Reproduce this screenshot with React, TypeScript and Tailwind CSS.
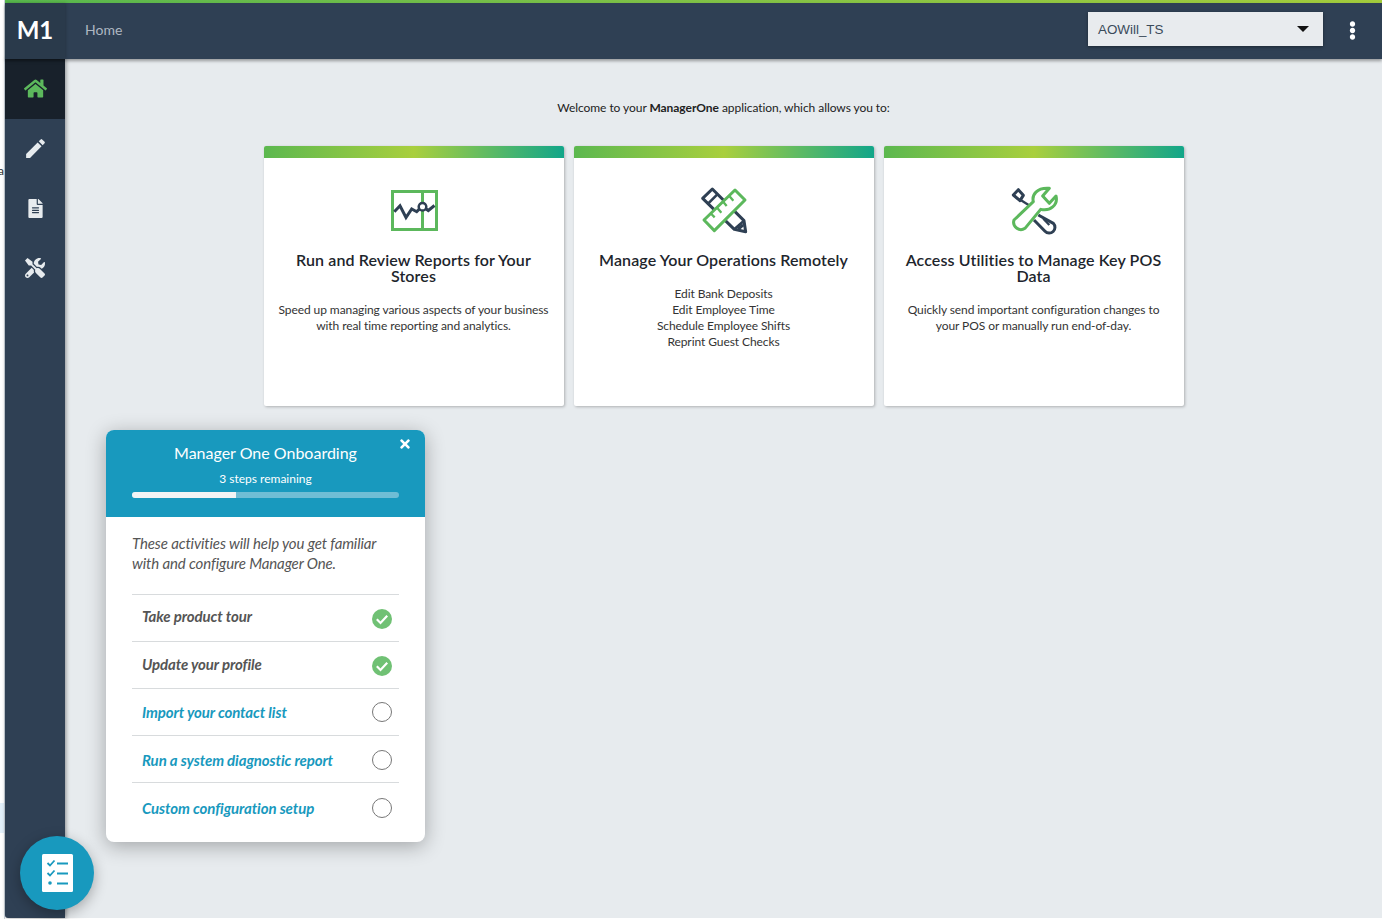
import { FaHome, FaFileAlt, FaTools, FaTimes, FaEllipsisV } from 'react-icons/fa';
import { MdEdit } from 'react-icons/md';

const ReportIcon = () => (
  <svg width="48" height="42" viewBox="0 0 48 42" fill="none">
    <rect x="1.500" y="1.500" width="44" height="38" stroke="#5cb85c" strokeWidth="3" />
    <path d="M31.500 2V40" stroke="#5cb85c" strokeWidth="3" />
    <path d="M3.300 21.700L9 15.700L15 27.500L20.700 19L25.700 21.700L29 18.500" stroke="#2f4054" strokeWidth="3" />
    <circle cx="31.500" cy="16.700" r="3.800" fill="#fff" stroke="#2f4054" strokeWidth="2.500" />
    <path d="M34.500 18.500L37.300 20.500L43.500 15.500" stroke="#2f4054" strokeWidth="3" />
  </svg>
);

const RulerIcon = () => (
  <svg width="100" height="70" viewBox="0 0 300 210" fill="none">
    <path d="M68 85L97 57L192 152L197 185L163 178Z" fill="#fff" stroke="#2f4054" strokeWidth="9" strokeLinejoin="round" />
    <path d="M85 100L112 73M163 178L192 152M175 178L190 165" stroke="#2f4054" strokeWidth="8" />
    <path d="M165 60L195 90L103 182L72 150Z" fill="#fff" stroke="#5cb85c" strokeWidth="9" strokeLinejoin="round" />
    <path d="M148 78L160 92M130 96L140 108M112 114L124 128M94 132L104 142" stroke="#5cb85c" strokeWidth="7" />
  </svg>
);

const WrenchIcon = () => (
  <svg width="100" height="70" viewBox="0 0 300 210" fill="none">
    <path d="M70 75L85 59L100 76L90 92Z" stroke="#2f4054" strokeWidth="9" strokeLinejoin="round" />
    <path d="M92 90L124 110" stroke="#2f4054" strokeWidth="7" />
    <path d="M145 135L190 160A17 17 0 0 1 165 184L132 150" stroke="#2f4054" strokeWidth="9" strokeLinejoin="round" />
    <path d="M160 146L178 165" stroke="#2f4054" strokeWidth="7" />
    <path d="M72 150L130 95C125 75 140 52 178 55L158 78L178 100L198 78C205 105 180 125 152 118L105 175A22 22 0 0 1 72 150Z" fill="#fff" stroke="#5cb85c" strokeWidth="9" strokeLinejoin="round" />
  </svg>
);

const ChecklistIcon = () => (
  <svg width="32" height="38" viewBox="0 0 32 38" fill="none">
    <rect width="31" height="38" rx="1.500" fill="#fff" />
    <path d="M5.500 9L8 11.500L12.500 6.500M5.500 19L8 21.500L12.500 16.500" stroke="#1899be" strokeWidth="1.800" />
    <circle cx="8" cy="29" r="1.800" fill="#1899be" />
    <path d="M15 9.500H26M15 19.500H26M15 29.500H26" stroke="#1899be" strokeWidth="1.800" />
  </svg>
);

const DoneIcon = () => (
  <svg width="20" height="20" viewBox="0 0 20 20" fill="none">
    <circle cx="10" cy="10" r="10" fill="#70c174" />
    <path d="M4.800 10.300L8.500 14L15.200 6.800" stroke="#fff" strokeWidth="2.200" />
  </svg>
);

const cards = [
  { title: 'Run and Review Reports for Your Stores', lines: ['Speed up managing various aspects of your business', 'with real time reporting and analytics.'], icon: 'report' },
  { title: 'Manage Your Operations Remotely', lines: ['Edit Bank Deposits', 'Edit Employee Time', 'Schedule Employee Shifts', 'Reprint Guest Checks'], icon: 'ruler' },
  { title: 'Access Utilities to Manage Key POS Data', lines: ['Quickly send important configuration changes to', 'your POS or manually run end-of-day.'], icon: 'wrench' },
];

// the rows in the screenshot aren't evenly centred, so each one carries its own nudge
const steps = [
  { label: 'Take product tour', done: true, text: 'pb-[4px]', mark: 'pt-[2px]' },
  { label: 'Update your profile', done: true, text: 'pb-[2px]', mark: 'pt-[2px]' },
  { label: 'Import your contact list', done: false, text: '', mark: '' },
  { label: 'Run a system diagnostic report', done: false, text: 'pt-[2px]', mark: 'pt-[2px]' },
  { label: 'Custom configuration setup', done: false, text: 'pt-[4px]', mark: 'pt-[4px]' },
];

const NavItem = ({ active, children }: { active?: boolean; children: React.ReactNode }) => (
  <div className={active ? 'h-[60px] pb-[2px] flex items-center justify-center bg-[#18212b] text-[#5cb85c]' : 'h-[60px] pb-[2px] flex items-center justify-center text-[#e7ebee]'}>
    {children}
  </div>
);

export default function App() {
  return (
    <div className="relative h-[919px] w-[1382px] overflow-hidden flex bg-white font-['Lato',sans-serif]">
      {/* sliver of the page behind the app */}
      <div className="w-[5px] shrink-0 border-r border-[#ccd5dd] overflow-hidden flex flex-col items-end text-[12px] text-[#333]">
        <div className="mt-[162px] leading-[18px]">a</div>
        <div className="mt-[623px] h-[30px] w-full bg-[#e3f0fa]" />
      </div>

      <div className="flex-1 min-w-0 flex flex-col">
        <div className="h-[3px] shrink-0 bg-gradient-to-r from-[#58b84e] to-[#a3cc3c]" />
        <header className="relative z-20 h-[56px] shrink-0 flex items-start bg-[#2f4054] shadow-[0_2px_3px_rgba(0,0,0,0.35)]">
          <div className="w-[60px] h-full pb-[2px] flex items-center justify-center bg-[#2a3a4b] text-white text-[24px] font-bold shadow-[1px_0_3px_rgba(0,0,0,0.2)]">M1</div>
          <div className="flex-1 h-[52px] flex items-center">
            <div className="ml-5 text-[14px] text-[#aeb7c2]">Home</div>
            <div className="ml-auto w-[235px] h-[34px] px-[10px] flex items-center justify-between bg-[#e8ebee] shadow-[0_1px_3px_rgba(0,0,0,0.4)] text-[13.400px] text-[#3a4a5a] font-['Liberation_Sans',sans-serif]">
              <span className="pt-[3px]">AOWill_TS</span>
              <span className="mr-[4px] w-0 h-0 border-x-[6px] border-x-transparent border-t-[6px] border-t-[#111]" />
            </div>
            <div className="w-[59px] pt-[2px] flex justify-center text-white text-[19px]"><FaEllipsisV /></div>
          </div>
        </header>

        <div className="flex-1 flex min-h-0 mb-[1px]">
          <nav className="relative z-10 w-[60px] shrink-0 bg-[#2f4054] shadow-[1px_0_4px_rgba(0,0,0,0.4)] rounded-bl-[3px]">
            <NavItem active><FaHome size={23} /></NavItem>
            <NavItem><MdEdit size={25} /></NavItem>
            <NavItem><FaFileAlt size={19} /></NavItem>
            <NavItem><FaTools size={20} /></NavItem>
          </nav>

          <main className="flex-1 bg-[#e7ebee] flex flex-col items-center pt-[40px]">
            <p className="text-[12px] leading-[18px] tracking-[-0.06px] text-[#222]">
              Welcome to your <b>ManagerOne</b> application, which allows you to:
            </p>
            <div className="mt-[29px] flex gap-[10px]">
              {cards.map((c) => (
                <div key={c.title} className="w-[300px] h-[260px] bg-white rounded-[2px] overflow-hidden shadow-[1px_1px_3px_rgba(0,0,0,0.25)] text-center">
                  <div className="h-[12px] bg-[linear-gradient(to_right,#5cb84f,#a9cf3e_50%,#12a689)]" />
                  <div className={c.icon === 'report' ? 'h-[94px] pt-[32px] pl-[2px] flex justify-center' : 'h-[94px] pt-[12px] pl-[12px] flex justify-center'}>
                    {c.icon === 'report' && <ReportIcon />}
                    {c.icon === 'ruler' && <RulerIcon />}
                    {c.icon === 'wrench' && <WrenchIcon />}
                  </div>
                  <h2 className="px-[20px] text-[16px] leading-[16px] tracking-[0.1px] font-semibold text-[#1d252c]">{c.title}</h2>
                  <div className="mt-[18px] text-[12px] leading-[16px] tracking-[-0.08px] text-[#333]">
                    {c.lines.map((l) => <div key={l}>{l}</div>)}
                  </div>
                </div>
              ))}
            </div>
          </main>
        </div>
      </div>

      {/* onboarding popover */}
      <div className="absolute z-30 left-[106px] top-[430px] w-[319px] h-[412px] bg-white rounded-[8px] shadow-[0_4px_20px_rgba(0,0,0,0.3)]">
        <div className="relative h-[87px] bg-[#1899be] rounded-t-[8px] px-[26px] pt-[12px] text-center text-white">
          <FaTimes size={14} className="absolute right-[13px] top-[7px]" />
          <div className="text-[16px] leading-[22px]">Manager One Onboarding</div>
          <div className="mt-[6px] text-[12px] leading-[18px]">3 steps remaining</div>
          <div className="mt-[4px] h-[6px] rounded-full bg-[#6fbdd5] overflow-hidden">
            <div className="h-full w-[104px] bg-[#f2f4f5]" />
          </div>
        </div>
        <div className="px-[26px]">
          <p className="pt-[16px] pb-[21px] text-[15px] leading-[20px] italic tracking-[-0.12px] text-[#555]">
            These activities will help you get familiar<br />with and configure Manager One.
          </p>
          {steps.map((s) => (
            <div key={s.label} className="h-[47px] border-t border-[#d8dbdd] flex items-center justify-between pl-[10px] pr-[7px]">
              <div className={s.text}>
                <span className={s.done ? 'text-[15px] font-bold italic tracking-[-0.1px] text-[#555]' : 'text-[15px] font-bold italic tracking-[-0.1px] text-[#1899be]'}>{s.label}</span>
              </div>
              <div className={s.mark}>
                {s.done ? <DoneIcon /> : <div className="w-[20px] h-[20px] rounded-full border border-[#777]" />}
              </div>
            </div>
          ))}
        </div>
      </div>

      {/* floating checklist button */}
      <div className="absolute z-40 left-[20px] top-[836px] w-[74px] h-[74px] pl-[2px] rounded-full bg-[#1899be] shadow-[0_4px_14px_rgba(0,0,0,0.3)] flex items-center justify-center">
        <ChecklistIcon />
      </div>
    </div>
  );
}
